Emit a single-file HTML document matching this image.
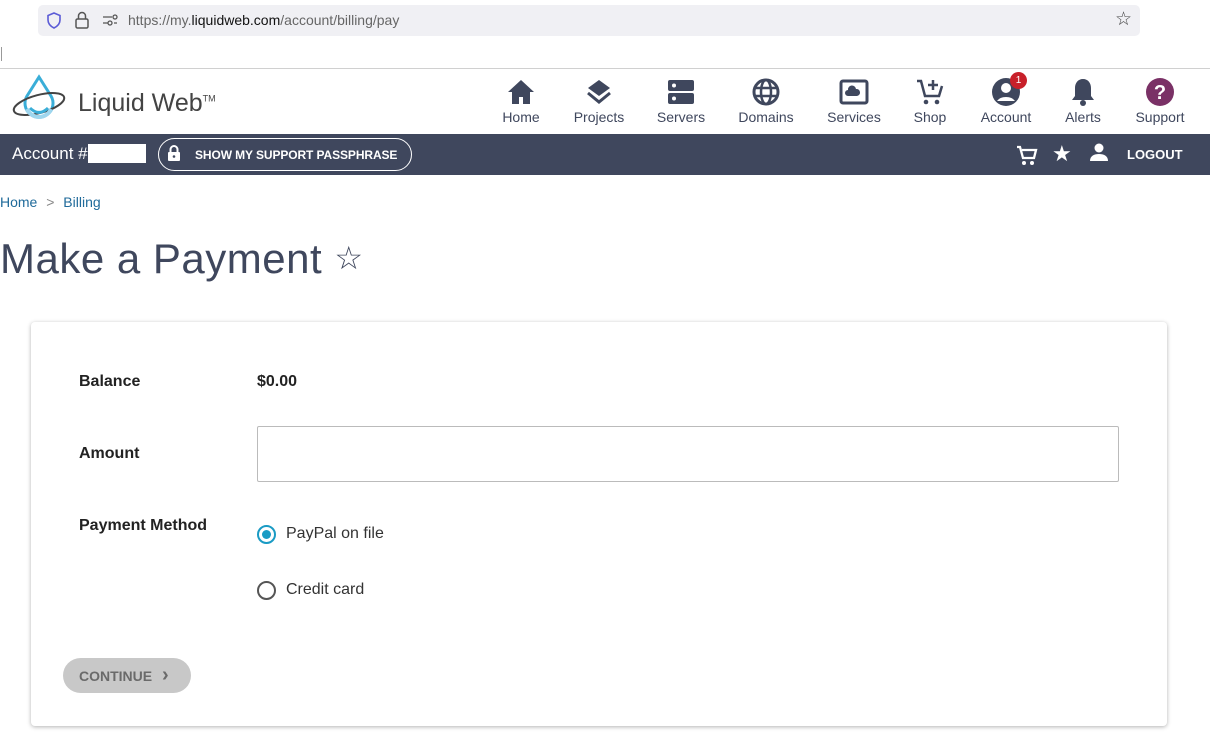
<!DOCTYPE html>
<html><head><meta charset="utf-8"><style>
*{box-sizing:border-box;margin:0;padding:0}
body{width:1210px;height:749px;overflow:hidden;background:#fff;font-family:"Liberation Sans",sans-serif;position:relative;color:#222}
.abs{position:absolute}
.urlbar{left:38px;top:5px;width:1102px;height:31px;background:#f0f0f4;border-radius:5px}
.nav{top:68px;left:0;width:1210px;height:66px;border-top:1px solid #d0d0d0}
.item{position:absolute;top:8px;text-align:center;font-size:14px;color:#3f475d;width:80px}
.item svg{display:block;margin:0 auto 2px;width:30px;height:30px}
.bar{top:134px;left:0;width:1210px;height:41px;background:#3f475d;color:#fff}
.card{left:31px;top:322px;width:1136px;height:404px;border-radius:4px;box-shadow:0 1px 4px rgba(0,0,0,.3);background:#fff}
.lbl{font-weight:bold;font-size:16px;color:#222}
</style></head><body>
<div class="abs urlbar"></div>
<svg class="abs" style="left:46px;top:12px" width="16" height="17" viewBox="0 0 16 17"><path d="M8 1L2 3.5V8c0 4 3 6.5 6 8 3-1.5 6-4 6-8V3.5z" fill="none" stroke="#5b5bd6" stroke-width="1.6"/></svg>
<svg class="abs" style="left:74px;top:11px" width="16" height="18" viewBox="0 0 16 18"><rect x="2" y="8" width="12" height="9" rx="1.5" fill="none" stroke="#555" stroke-width="1.5"/><path d="M4.5 8V5a3.5 3.5 0 017 0v3" fill="none" stroke="#555" stroke-width="1.5"/></svg>
<svg class="abs" style="left:102px;top:14px" width="16" height="12" viewBox="0 0 16 12"><path d="M1 3h9M1 9h5M12 9h3" stroke="#555" stroke-width="1.3"/><circle cx="13" cy="3" r="2" fill="none" stroke="#555" stroke-width="1.3"/><circle cx="8" cy="9" r="2" fill="none" stroke="#555" stroke-width="1.3"/></svg>
<div class="abs" style="left:128px;top:12px;font-size:14px;color:#666">https://my.<span style="color:#111">liquidweb.com</span>/account/billing/pay</div>
<div class="abs" style="left:1115px;top:8px;font-size:19px;color:#444">☆</div>
<div class="abs" style="left:1px;top:47px;width:1px;height:14px;background:#999"></div>
<div class="abs nav">
<svg class="abs" style="left:10px;top:5px" width="58" height="56" viewBox="0 0 58 56"><path d="M29 3L17 22a14 14 0 1024 0z" fill="none" stroke="#3aaed8" stroke-width="3"/><ellipse cx="29" cy="30" rx="26" ry="9" fill="none" stroke="#444" stroke-width="2" transform="rotate(-15 29 30)"/><path d="M20 34q9 9 18 0" fill="none" stroke="#3aaed8" stroke-width="3"/><path d="M17 35a13 13 0 0024 0" fill="none" stroke="#9fd6ee" stroke-width="4"/></svg>
<div class="abs" style="left:78px;top:20px;font-size:25px;color:#444">Liquid Web<sup style="font-size:9px">TM</sup></div>
<div class="item" style="left:481px"><svg viewBox="0 0 30 30"><path d="M15 3L2 15h4v12h7v-7h4v7h7V15h4z" fill="#3f475d"/></svg>Home</div>
<div class="item" style="left:559px"><svg viewBox="0 0 30 30"><path d="M15 3l11 8-11 8-11-8z" fill="#3f475d"/><path d="M4 16l11 9 11-9" fill="none" stroke="#3f475d" stroke-width="3"/></svg>Projects</div>
<div class="item" style="left:641px"><svg viewBox="0 0 30 30"><rect x="2" y="3" width="26" height="11" rx="2" fill="#3f475d"/><rect x="2" y="16" width="26" height="11" rx="2" fill="#3f475d"/><circle cx="8" cy="8.5" r="2" fill="#fff"/><circle cx="8" cy="21.5" r="2" fill="#fff"/></svg>Servers</div>
<div class="item" style="left:726px"><svg viewBox="0 0 30 30"><circle cx="15" cy="15" r="12" fill="none" stroke="#3f475d" stroke-width="3"/><ellipse cx="15" cy="15" rx="5" ry="12" fill="none" stroke="#3f475d" stroke-width="2.5"/><path d="M3 11h24M3 19h24" stroke="#3f475d" stroke-width="2.5"/></svg>Domains</div>
<div class="item" style="left:814px"><svg viewBox="0 0 30 30"><rect x="2" y="4" width="26" height="22" rx="2" fill="none" stroke="#3f475d" stroke-width="3"/><path d="M9 19a3 3 0 010-6 4 4 0 018-1 3.5 3.5 0 011 7z" fill="#3f475d"/></svg>Services</div>
<div class="item" style="left:890px"><svg viewBox="0 0 30 30"><path d="M2 4h4l4 15h14l3-10" fill="none" stroke="#3f475d" stroke-width="2.5"/><path d="M18 3v10M13 8h10" stroke="#3f475d" stroke-width="2.5"/><circle cx="11" cy="25" r="2.3" fill="#3f475d"/><circle cx="22" cy="25" r="2.3" fill="#3f475d"/></svg>Shop</div>
<div class="item" style="left:966px"><svg viewBox="0 0 30 30"><circle cx="15" cy="15" r="14" fill="#3f475d"/><circle cx="15" cy="11" r="5" fill="#fff"/><path d="M6 24a10 7 0 0118 0" fill="#fff"/></svg>Account</div>
<div class="abs" style="left:1010px;top:3px;width:17px;height:17px;border-radius:50%;background:#c8202a;color:#fff;font-size:10px;text-align:center;line-height:17px">1</div>
<div class="item" style="left:1043px"><svg viewBox="0 0 30 30"><path d="M15 2c-5 0-8 4-8 9v8l-3 4h22l-3-4v-8c0-5-3-9-8-9z" fill="#3f475d"/><circle cx="15" cy="26" r="3" fill="#3f475d"/></svg>Alerts</div>
<div class="item" style="left:1120px"><svg viewBox="0 0 30 30"><circle cx="15" cy="15" r="14" fill="#7a3166"/><text x="15" y="22" text-anchor="middle" font-size="20" font-weight="bold" fill="#fff" font-family="Liberation Sans">?</text></svg>Support</div>
</div>
<div class="abs bar">
<div class="abs" style="left:12px;top:10px;font-size:17px">Account #</div>
<div class="abs" style="left:88px;top:10px;width:58px;height:19px;background:#fff"></div>
<div class="abs" style="left:158px;top:4px;width:254px;height:33px;border:1.5px solid #fff;border-radius:17px"></div>
<svg class="abs" style="left:167px;top:11px" width="14" height="17" viewBox="0 0 14 17"><rect x="1" y="7" width="12" height="9" rx="1" fill="#fff"/><path d="M3.5 7V4.5a3.5 3.5 0 017 0V7" fill="none" stroke="#fff" stroke-width="2"/><circle cx="7" cy="11.5" r="1.3" fill="#3f475d"/></svg>
<div class="abs" style="left:195px;top:14px;font-size:12px;font-weight:bold;letter-spacing:-0.1px">SHOW MY SUPPORT PASSPHRASE</div>
<svg class="abs" style="left:1016px;top:11px" width="22" height="22" viewBox="0 0 22 22"><path d="M1 2h3l3 11h11l2-8H6" fill="none" stroke="#fff" stroke-width="2.3"/><circle cx="8" cy="18" r="2" fill="#fff"/><circle cx="16" cy="18" r="2" fill="#fff"/></svg>
<div class="abs" style="left:1052px;top:7px;font-size:22px">★</div>
<svg class="abs" style="left:1090px;top:9px" width="18" height="18" viewBox="0 0 18 18"><circle cx="9" cy="5" r="4.5" fill="#fff"/><path d="M0 18c0-5 4-7 9-7s9 2 9 7z" fill="#fff"/></svg>
<div class="abs" style="left:1127px;top:13px;font-size:13px;font-weight:bold">LOGOUT</div>
</div>
<div class="abs" style="left:0;top:194px;font-size:14px;color:#1f6a9a">Home <span style="color:#888;margin:0 5px">&gt;</span> Billing</div>
<div class="abs" style="left:0;top:235px;font-size:42px;color:#3f475d;letter-spacing:0.5px">Make a Payment <span style="font-size:32px;vertical-align:4px">☆</span></div>
<div class="abs card">
<div class="abs lbl" style="left:48px;top:51px">Balance</div>
<div class="abs lbl" style="left:226px;top:51px">$0.00</div>
<div class="abs lbl" style="left:48px;top:123px">Amount</div>
<div class="abs" style="left:226px;top:104px;width:862px;height:56px;border:1px solid #bbb;border-radius:2px"></div>
<div class="abs lbl" style="left:48px;top:195px">Payment Method</div>
<div class="abs" style="left:226px;top:203px;width:19px;height:19px;border:2px solid #1a9bc4;border-radius:50%"><div style="margin:3px;width:9px;height:9px;border-radius:50%;background:#1a9bc4"></div></div>
<div class="abs" style="left:255px;top:203px;font-size:16px;color:#333">PayPal on file</div>
<div class="abs" style="left:226px;top:259px;width:19px;height:19px;border:2px solid #555;border-radius:50%"></div>
<div class="abs" style="left:255px;top:259px;font-size:16px;color:#333">Credit card</div>
<div class="abs" style="left:32px;top:336px;width:128px;height:35px;border-radius:18px;background:#c8c8c8;color:#6a6a6a;font-size:14px;font-weight:bold;line-height:35px;padding-left:16px">CONTINUE <span style="font-size:20px;margin-left:6px">›</span></div>
</div>
</body></html>
